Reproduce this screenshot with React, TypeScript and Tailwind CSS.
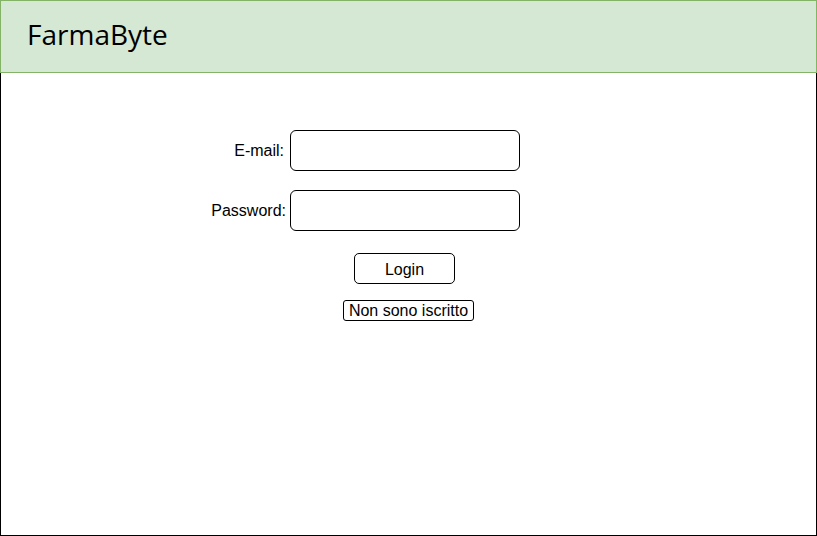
export default function App() {
  return (
    <div className="w-[817px] h-[536px] bg-white flex flex-col" style={{ fontFamily: '"Liberation Sans", Arial, sans-serif' }}>
      <div className="h-[73px] border border-[#82b366] bg-[#d5e8d4] flex items-center pl-[26px] pb-[5px]">
        <span className="text-[28px] text-black leading-none" style={{ fontFamily: '"Open Sans", sans-serif' }}>FarmaByte</span>
      </div>
      <div className="h-[463px] border-x border-b border-black flex flex-col items-start text-[16px] text-black">
        <div className="flex items-center mt-[57px]">
          <span className="w-[283px] text-right mr-[6px]">E-mail:</span>
          <div className="w-[230px] h-[41px] border border-black rounded-[6px]" />
        </div>
        <div className="flex items-center mt-[19px]">
          <span className="w-[285px] text-right mr-[4px]">Password:</span>
          <div className="w-[230px] h-[41px] border border-black rounded-[6px]" />
        </div>
        <div className="ml-[353px] mt-[22px] w-[101px] h-[31px] border border-black rounded-[5px] flex items-center justify-center pt-[2px]">
          Login
        </div>
        <div className="ml-[342px] mt-[16px] w-[131px] h-[21px] border border-black rounded-[3px] flex items-center justify-center">
          Non sono iscritto
        </div>
      </div>
    </div>
  );
}
